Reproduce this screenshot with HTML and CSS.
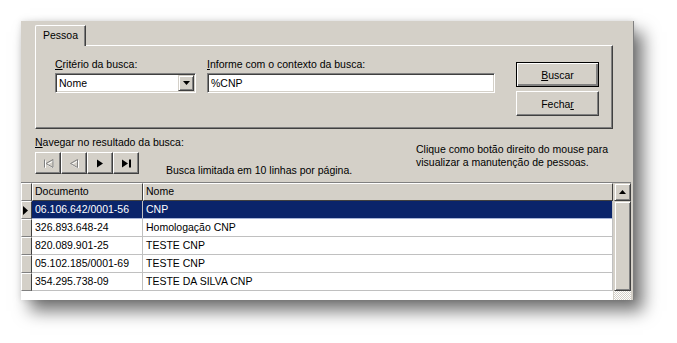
FILE: index.html
```html
<!DOCTYPE html>
<html lang="pt">
<head>
  <meta charset="UTF-8" />
  <title>Pessoa</title>
  <link rel="stylesheet" href="styles.css">
</head>
<body>
  <div class="window">
    <div class="tabs">
      <div class="tab">Pessoa</div>
    </div>
    <div class="page">
      <div class="field combo-field">
        <label><u>C</u>ritério da busca:</label>
        <div class="combo">
          <span class="combo-text">Nome</span>
          <span class="drop">
            <svg width="7" height="4" viewBox="0 0 7 4"><path d="M0 0h7L3.5 4z" fill="#000"/></svg>
          </span>
        </div>
      </div>
      <div class="field text-field">
        <label><u>I</u>nforme com o contexto da busca:</label>
        <div class="edit">%CNP</div>
      </div>
      <div class="buttons">
        <button class="btn default"><u>B</u>uscar</button>
        <button class="btn">Fecha<u>r</u></button>
      </div>
    </div>

    <div class="nav">
      <div class="nav-left">
        <div class="nav-label"><u>N</u>avegar no resultado da busca:</div>
        <div class="nav-buttons">
          <span class="nbtn">
            <svg width="11" height="9" viewBox="0 0 11 9"><path d="M1.5 0.5v8M10 0.5L3 4.5l7 4z" fill="none" stroke="#fff" transform="translate(1 1)"/><path d="M1.5 0.5v8M10 0.5L3 4.5l7 4z" fill="none" stroke="#808080"/></svg>
          </span>
          <span class="nbtn">
            <svg width="10" height="9" viewBox="0 0 10 9"><path d="M8.5 0.5L1.5 4.5l7 4z" fill="none" stroke="#fff" transform="translate(1 1)"/><path d="M8.5 0.5L1.5 4.5l7 4z" fill="none" stroke="#808080"/></svg>
          </span>
          <span class="nbtn">
            <svg width="8" height="9" viewBox="0 0 8 9"><path d="M1 0.5L7 4.5L1 8.5z" fill="#000"/></svg>
          </span>
          <span class="nbtn">
            <svg width="11" height="9" viewBox="0 0 11 9"><path d="M1 0.5L7 4.5L1 8.5z" fill="#000"/><rect x="8" y="0.5" width="2" height="8" fill="#000"/></svg>
          </span>
        </div>
      </div>
      <div class="limit">Busca limitada em 10 linhas por página.</div>
      <div class="hint">Clique como botão direito do mouse para<br>visualizar a manutenção de pessoas.</div>
    </div>

    <div class="grid">
      <div class="grid-body">
        <div class="row head">
          <div class="ind"></div>
          <div class="cell doc">Documento</div>
          <div class="cell name">Nome</div>
        </div>
        <div class="row selected">
          <div class="ind">
            <svg width="5" height="9" viewBox="0 0 5 9"><path d="M0 0L5 4.5L0 9z" fill="#000"/></svg>
          </div>
          <div class="cell doc">06.106.642/0001-56</div>
          <div class="cell name">CNP</div>
        </div>
        <div class="row">
          <div class="ind"></div>
          <div class="cell doc">326.893.648-24</div>
          <div class="cell name">Homologação CNP</div>
        </div>
        <div class="row">
          <div class="ind"></div>
          <div class="cell doc">820.089.901-25</div>
          <div class="cell name">TESTE CNP</div>
        </div>
        <div class="row">
          <div class="ind"></div>
          <div class="cell doc">05.102.185/0001-69</div>
          <div class="cell name">TESTE CNP</div>
        </div>
        <div class="row">
          <div class="ind"></div>
          <div class="cell doc">354.295.738-09</div>
          <div class="cell name">TESTE DA SILVA CNP</div>
        </div>
      </div>
      <div class="scrollbar">
        <div class="sb-btn">
          <svg width="7" height="4" viewBox="0 0 7 4"><path d="M0 4h7L3.5 0z" fill="#000"/></svg>
        </div>
        <div class="sb-thumb"></div>
        <div class="sb-rest"></div>
      </div>
    </div>
  </div>
</body>
</html>
```

FILE: styles.css
```css
* {
  box-sizing: border-box;
  margin: 0;
  padding: 0;
}
html, body {
  background: #fff;
  min-height: 343px;
}
body {
  font-family: "Liberation Sans", Arial, sans-serif;
  font-size: 10.5px;
  color: #000;
  padding: 21px 0 0 21px;
}
u {
  text-decoration: underline;
  text-underline-offset: 1px;
}
.window {
  width: 613px;
  height: 279px;
  background: #d4d0c8;
  border-right: 1px solid #808080;
  display: flex;
  flex-direction: column;
  box-shadow: 9px 11px 16px rgba(0, 0, 0, 0.55), 0 0 6px rgba(0, 0, 0, 0.12);
}
.tabs {
  padding: 4px 0 0 14px;
  height: 24px;
  display: flex;
}
.tab {
  width: 51px;
  height: 21px;
  padding: 3px 0 0 7px;
  border-top: 1px solid #fff;
  border-left: 1px solid #fff;
  border-right: 1px solid #404040;
  border-top-left-radius: 2px;
  box-shadow: inset -1px 0 0 #808080;
  background: #d4d0c8;
  position: relative;
  z-index: 1;
}
.page {
  margin: 0 20px 0 14px;
  height: 84px;
  border-top: 1px solid #fff;
  border-left: 1px solid #fff;
  border-right: 1px solid #404040;
  border-bottom: 1px solid #404040;
  box-shadow: inset -1px -1px 0 #808080;
  display: flex;
  padding: 12px 13px 0 19px;
}
.field label {
  display: block;
  height: 15px;
  line-height: 13px;
}
.combo-field {
  width: 141px;
}
.text-field {
  width: 288px;
  margin-left: 11px;
}
.combo, .edit {
  height: 20px;
  background: #fff;
  border-top: 1px solid #808080;
  border-left: 1px solid #808080;
  border-right: 1px solid #fff;
  border-bottom: 1px solid #fff;
  box-shadow: inset 1px 1px 0 #404040, inset -1px -1px 0 #d4d0c8;
  display: flex;
  align-items: center;
  padding-left: 3px;
}
.combo-text {
  flex: 1;
}
.drop {
  width: 16px;
  height: 16px;
  margin-right: 1px;
  background: #d4d0c8;
  border-top: 1px solid #d4d0c8;
  border-left: 1px solid #d4d0c8;
  border-right: 1px solid #404040;
  border-bottom: 1px solid #404040;
  box-shadow: inset 1px 1px 0 #fff, inset -1px -1px 0 #808080;
  display: flex;
  align-items: center;
  justify-content: center;
}
.buttons {
  margin-left: auto;
  margin-top: 4px;
  display: flex;
  flex-direction: column;
  gap: 4px;
}
.btn {
  width: 83px;
  height: 25px;
  font-family: inherit;
  font-size: 10.5px;
  color: #000;
  background: #d4d0c8;
  border-top: 1px solid #fff;
  border-left: 1px solid #fff;
  border-right: 1px solid #404040;
  border-bottom: 1px solid #404040;
  box-shadow: inset -1px -1px 0 #808080;
}
.btn.default {
  border: 1px solid #000;
  box-shadow: inset 1px 1px 0 #fff, inset -2px -2px 0 #808080;
}
.nav {
  height: 53px;
  display: flex;
  padding-left: 14px;
}
.nav-left {
  width: 131px;
  padding-top: 7px;
}
.nav-label {
  height: 16px;
  line-height: 13px;
  white-space: nowrap;
}
.nav-buttons {
  display: flex;
}
.nbtn {
  width: 26px;
  height: 22px;
  background: #d4d0c8;
  border-top: 1px solid #fff;
  border-left: 1px solid #fff;
  border-right: 1px solid #404040;
  border-bottom: 1px solid #404040;
  box-shadow: inset -1px -1px 0 #808080;
  display: flex;
  align-items: center;
  justify-content: center;
}
.limit {
  width: 250px;
  margin-top: 35px;
  line-height: 13px;
}
.hint {
  margin-top: 14px;
  line-height: 13px;
}
.grid {
  flex: 1;
  display: flex;
  background: #fff;
  border-top: 1px solid #808080;
  margin-right: 2px;
}
.grid-body {
  flex: 1;
}
.row {
  display: flex;
  height: 18px;
}
.ind {
  width: 11px;
  background: #d4d0c8;
  border-top: 1px solid #fff;
  border-left: 1px solid #fff;
  border-right: 1px solid #404040;
  border-bottom: 1px solid #808080;
  display: flex;
  align-items: center;
  padding-left: 1px;
}
.cell {
  padding: 2px 0 0 3px;
  line-height: 13px;
  border-right: 1px solid #c0c0c0;
  border-bottom: 1px solid #c0c0c0;
  white-space: nowrap;
}
.doc {
  width: 111px;
}
.name {
  flex: 1;
}
.head .cell {
  background: #d4d0c8;
  border-top: 1px solid #fff;
  border-left: 1px solid #fff;
  border-right: 1px solid #404040;
  border-bottom: 1px solid #404040;
  padding-top: 1px;
  padding-left: 2px;
}
.selected .cell {
  background: #0a246a;
  color: #fff;
  border-bottom-color: #a6b4d8;
}
.scrollbar {
  width: 18px;
  display: flex;
  flex-direction: column;
  border-left: 1px solid #d4d0c8;
}
.sb-btn, .sb-thumb {
  background: #d4d0c8;
  border-top: 1px solid #d4d0c8;
  border-left: 1px solid #d4d0c8;
  border-right: 1px solid #404040;
  border-bottom: 1px solid #404040;
  box-shadow: inset 1px 1px 0 #fff, inset -1px -1px 0 #808080;
}
.sb-btn {
  height: 18px;
  display: flex;
  align-items: center;
  justify-content: center;
}
.sb-thumb {
  height: 90px;
}
.sb-rest {
  flex: 1;
  background: repeating-conic-gradient(#d4d0c8 0 25%, #fff 0 50%) 0 0 / 2px 2px;
}
```
